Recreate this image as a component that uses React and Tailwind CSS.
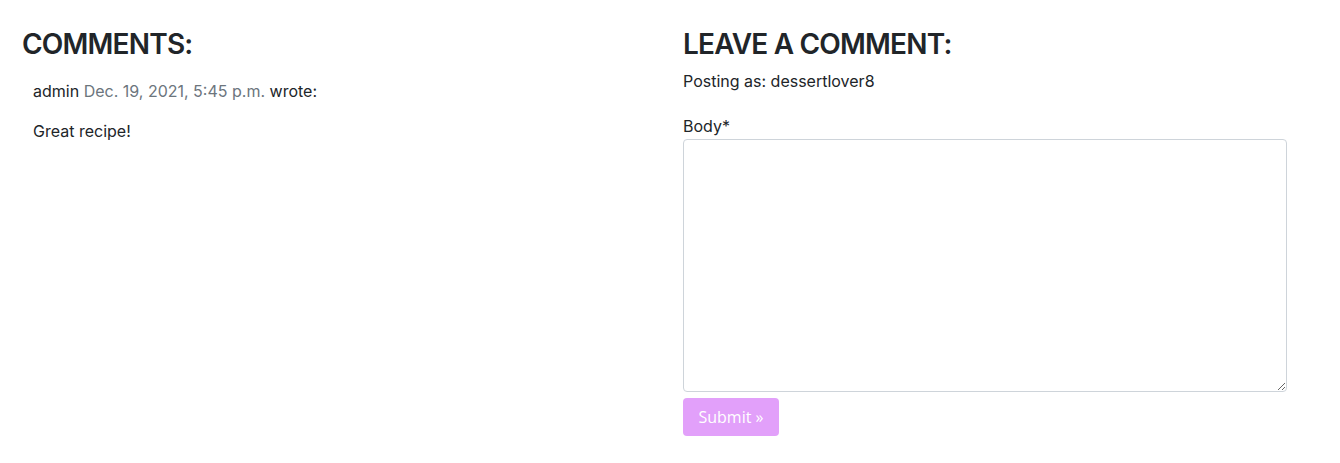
import React from 'react';

const headingFont = { fontFamily: 'Inter, "Noto Sans", sans-serif' };

const App = () => {
  return (
    <div className="min-h-screen bg-white text-[#212529] font-['Inter','Noto_Sans',sans-serif]">
      <div className="flex pl-[22px] pt-[27px]">
        {/* comments list */}
        <div className="w-[661px] shrink-0">
          <h3 className="text-[28px] leading-[34px] font-semibold tracking-[-0.8px] uppercase" style={headingFont}>
            Comments:
          </h3>
          <div className="pl-[11px] pt-[18px] text-[16px] leading-[24px]">
            <p>
              admin <span className="text-[#6c757d]">Dec. 19, 2021, 5:45 p.m.</span> wrote:
            </p>
            <p className="mt-[16px]">Great recipe!</p>
          </div>
        </div>

        {/* comment form */}
        <div className="w-[604px] shrink-0">
          <h3 className="text-[28px] leading-[34px] font-semibold tracking-[-0.8px] uppercase" style={headingFont}>
            Leave a comment:
          </h3>
          <p className="pt-[8px] text-[16px] leading-[24px]">Posting as: dessertlover8</p>
          <form className="mt-[21px]">
            <label className="block text-[16px] leading-[24px]">Body*</label>
            <textarea
              className="block w-[604px] h-[253px] mt-[1px] border border-[#ced4da] rounded-[4px] resize-y"
            />
            <button
              type="button"
              className="mt-[6px] w-[96px] h-[38px] rounded-[4px] bg-[#e2a0fa] text-white text-[16px] font-['Open_Sans',sans-serif]"
            >
              Submit »
            </button>
          </form>
        </div>
      </div>
    </div>
  );
};

export default App;
